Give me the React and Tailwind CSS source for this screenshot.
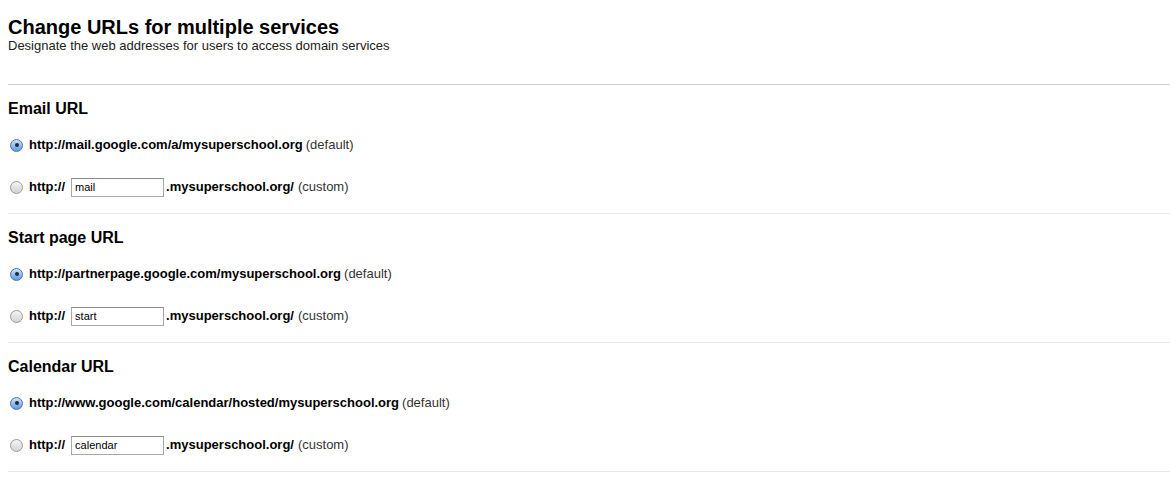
import React from "react";

const sections = [
  {
    title: "Email URL",
    def: "http://mail.google.com/a/mysuperschool.org",
    sub: "mail",
  },
  {
    title: "Start page URL",
    def: "http://partnerpage.google.com/mysuperschool.org",
    sub: "start",
  },
  {
    title: "Calendar URL",
    def: "http://www.google.com/calendar/hosted/mysuperschool.org",
    sub: "calendar",
  },
];

const Radio = ({ on }) =>
  on ? (
    <span className="inline-flex items-center justify-center w-[13px] h-[13px] rounded-full border border-[#4a74a8] bg-gradient-to-b from-[#cfe3fa] to-[#5f9be0] shrink-0">
      <span className="w-[4px] h-[4px] rounded-full bg-[#1c2a3c]" />
    </span>
  ) : (
    <span className="inline-block w-[13px] h-[13px] rounded-full border border-[#9a9a9a] bg-gradient-to-b from-[#f4f4f4] to-[#d4d4d4] shrink-0" />
  );

const Section = ({ title, def, sub }) => (
  <div className="border-b border-[#e8e8e8] pt-[14px] pb-[15px]">
    <h2 className="h-[20px] leading-[20px] text-[16px] font-bold text-black">{title}</h2>
    <div className="mt-[15px] h-[22px] flex items-center pl-[2px]">
      <Radio on />
      <span className="ml-[6px] text-[13px] font-bold text-black">{def}</span>
      <span className="ml-[3px] text-[13px] text-[#333]">(default)</span>
    </div>
    <div className="mt-[20px] h-[22px] flex items-center pl-[2px]">
      <Radio />
      <span className="ml-[6px] text-[13px] font-bold text-black">http://</span>
      <input
        type="text"
        defaultValue={sub}
        className="ml-[6px] w-[93px] h-[19px] border border-[#a8a8a8] border-t-[#8a8a8a] px-[3px] text-[11px] text-black outline-none"
      />
      <span className="ml-[2px] text-[13px] font-bold text-black">.mysuperschool.org/</span>
      <span className="ml-[4px] text-[13px] text-[#333]">(custom)</span>
    </div>
  </div>
);

export default function App() {
  return (
    <div className="w-[1170px] h-[484px] bg-white pl-[8px] font-['Liberation_Sans',Arial,sans-serif] overflow-hidden">
      <div className="pt-[16px] pb-[31px] border-b border-[#cccccc]">
        <h1 className="text-[20px] leading-[22px] font-bold text-black">Change URLs for multiple services</h1>
        <p className="text-[13px] leading-[15px] text-[#222]">Designate the web addresses for users to access domain services</p>
      </div>
      {sections.map((s) => (
        <Section key={s.title} {...s} />
      ))}
    </div>
  );
}
